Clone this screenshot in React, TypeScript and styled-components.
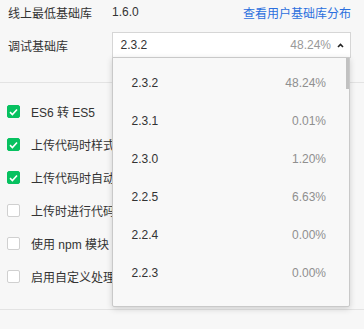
import * as React from 'react';
import styled, { createGlobalStyle } from 'styled-components';

const GlobalStyle = createGlobalStyle`
  body {
    margin: 0;
    background: #f7f7f7;
    font-family: "Liberation Sans", "Noto Sans CJK SC", sans-serif;
    font-size: 12px;
    color: #333;
  }
`;

const StyledPage = styled.div`
  width: 364px;
  height: 329px;
  overflow: hidden;
  position: relative;
`;

const StyledBaseSection = styled.div`
  padding: 0 13px 24px 8px;
  border-bottom: 1px solid #e3e3e3;
`;

const StyledRow = styled.div<{ height: number }>`
  display: flex;
  align-items: center;
  height: ${({ height }) => height}px;

  & + & {
    margin-top: 8px;
  }

  .label {
    width: 104px;
    flex-shrink: 0;
  }

  .value {
    flex: 1;
  }

  .link {
    color: #2b6fde;
    cursor: pointer;
  }
`;

const StyledSelectWrap = styled.div`
  position: relative;
  flex: 1;
  margin-left: -0.5px;
`;

const StyledSelect = styled.div`
  display: flex;
  align-items: center;
  height: 24px;
  padding: 0 6px 0 8px;
  background: #fff;
  border: 1px solid #d6d6d6;

  .version {
    flex: 1;
  }

  .percent {
    color: #999;
    margin-right: 6px;
  }
`;

const StyledDropdown = styled.div`
  position: absolute;
  top: 25px;
  left: 0;
  right: 1px;
  height: 250px;
  overflow: hidden;
  padding-top: 6px;
  background: #f8f8f8;
  border: 1px solid #c9c9c9;
  border-radius: 0 0 2px 2px;
  box-shadow: 0 2px 6px rgba(0, 0, 0, 0.16);
  box-sizing: border-box;
  z-index: 2;

  .thumb {
    position: absolute;
    top: 0;
    right: 0;
    width: 3px;
    height: 31px;
    background: #c1c1c1;
  }
`;

const StyledOption = styled.div`
  display: flex;
  align-items: center;
  justify-content: space-between;
  height: 38px;
  padding: 0 23px 0 19px;

  .percent {
    color: #8f8f8f;
  }
`;

const StyledOptionList = styled.div`
  padding: 12px 0 16px;
  border-bottom: 1px solid #e3e3e3;
`;

const StyledCheckRow = styled.div`
  display: flex;
  align-items: center;
  gap: 11px;
  height: 33px;
  padding-left: 7px;
  white-space: nowrap;
`;

const StyledBox = styled.span<{ checked: boolean }>`
  display: flex;
  align-items: center;
  justify-content: center;
  width: 13px;
  height: 13px;
  box-sizing: border-box;
  border-radius: 2px;
  background: ${({ checked }) => (checked ? '#07c160' : '#fff')};
  border: 1px solid ${({ checked }) => (checked ? '#07c160' : '#d0d0d0')};
`;

const versions = [
  ['2.3.2', '48.24%'],
  ['2.3.1', '0.01%'],
  ['2.3.0', '1.20%'],
  ['2.2.5', '6.63%'],
  ['2.2.4', '0.00%'],
  ['2.2.3', '0.00%'],
  ['2.2.2', '0.00%'],
];

const options = [
  { text: 'ES6 转 ES5', checked: true },
  { text: '上传代码时样式自动补全', checked: true },
  { text: '上传代码时自动压缩', checked: true },
  { text: '上传时进行代码保护', checked: false },
  { text: '使用 npm 模块', checked: false },
  { text: '启用自定义处理命令', checked: false },
];

function Caret() {
  return (
    <svg width="7" height="5" viewBox="0 0 7 5">
      <path d="M1 4 L3.5 1.5 L6 4" fill="none" stroke="#222" strokeWidth="1.6" />
    </svg>
  );
}

function Check() {
  return (
    <svg width="9" height="8" viewBox="0 0 9 8">
      <path d="M1 4.2 L3.4 6.5 L8 1.5" fill="none" stroke="#fff" strokeWidth="1.6" />
    </svg>
  );
}

export default function App() {
  return (
    <StyledPage>
      <GlobalStyle />
      <StyledBaseSection>
        <StyledRow height={24}>
          <span className='label'>线上最低基础库</span>
          <span className='value'>1.6.0</span>
          <span className='link'>查看用户基础库分布</span>
        </StyledRow>
        <StyledRow height={26}>
          <span className='label'>调试基础库</span>
          <StyledSelectWrap>
            <StyledSelect>
              <span className='version'>2.3.2</span>
              <span className='percent'>48.24%</span>
              <Caret />
            </StyledSelect>
            <StyledDropdown>
              <div className='thumb' />
              {versions.map(([version, percent]) => (
                <StyledOption key={version}>
                  <span>{version}</span>
                  <span className='percent'>{percent}</span>
                </StyledOption>
              ))}
            </StyledDropdown>
          </StyledSelectWrap>
        </StyledRow>
      </StyledBaseSection>

      <StyledOptionList>
        {options.map((option) => (
          <StyledCheckRow key={option.text}>
            <StyledBox checked={option.checked}>{option.checked && <Check />}</StyledBox>
            <span>{option.text}</span>
          </StyledCheckRow>
        ))}
      </StyledOptionList>
    </StyledPage>
  );
}
